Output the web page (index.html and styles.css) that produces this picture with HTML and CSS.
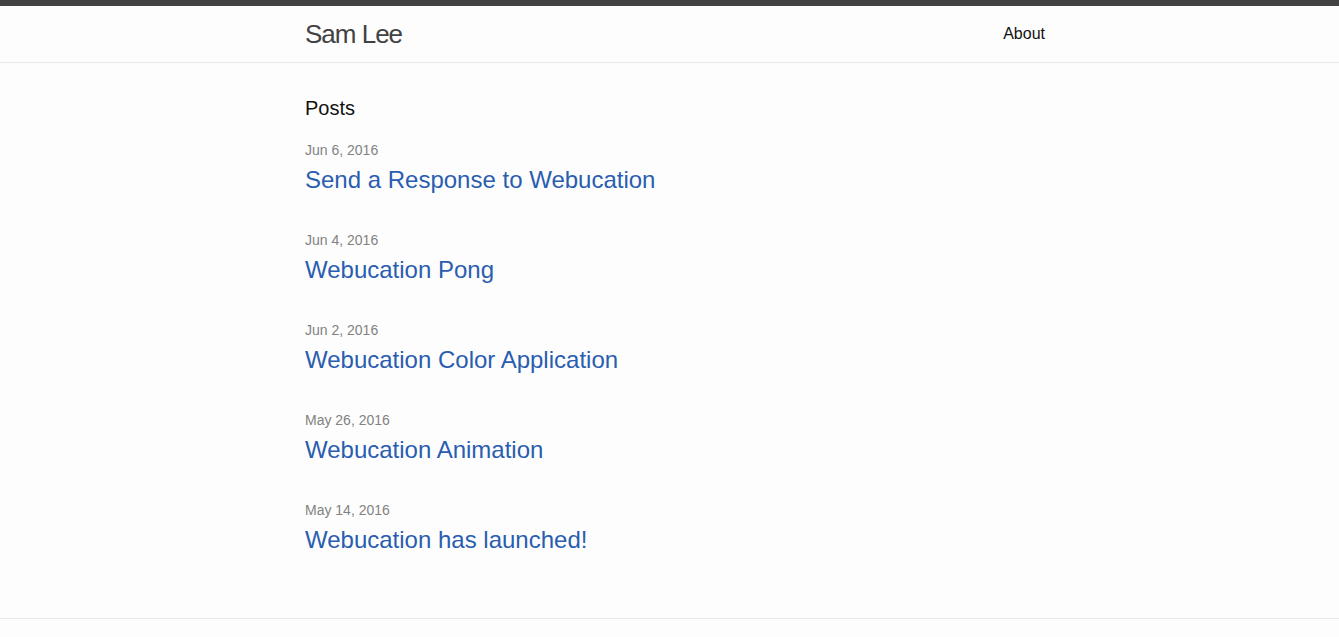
FILE: index.html
```html
<!DOCTYPE html>
<html lang="en">
<head>
<meta charset="utf-8">
<title>Sam Lee</title>
<link rel="stylesheet" href="styles.css">
</head>
<body>
<header class="site-header">
  <div class="wrapper header-row">
    <a class="site-title" href="#">Sam Lee</a>
    <nav class="site-nav">
      <a class="page-link" href="#">About</a>
    </nav>
  </div>
</header>
<main class="page-content">
  <div class="wrapper">
    <h1 class="page-heading">Posts</h1>
    <ul class="post-list">
      <li><span class="post-meta">Jun 6, 2016</span><h2><a class="post-link" href="#">Send a Response to Webucation</a></h2></li>
      <li><span class="post-meta">Jun 4, 2016</span><h2><a class="post-link" href="#">Webucation Pong</a></h2></li>
      <li><span class="post-meta">Jun 2, 2016</span><h2><a class="post-link" href="#">Webucation Color Application</a></h2></li>
      <li><span class="post-meta">May 26, 2016</span><h2><a class="post-link" href="#">Webucation Animation</a></h2></li>
      <li><span class="post-meta">May 14, 2016</span><h2><a class="post-link" href="#">Webucation has launched!</a></h2></li>
    </ul>
  </div>
</main>
<footer class="site-footer">
  <div class="wrapper footer-inner"></div>
</footer>
</body>
</html>
```
FILE: styles.css
```css
html, body {
  margin: 0;
  padding: 0;
}
body {
  font-family: "Liberation Sans", Arial, sans-serif;
  font-size: 16px;
  line-height: 1.5;
  color: #111111;
  background: #fdfdfd;
}
a {
  text-decoration: none;
}
.wrapper {
  max-width: 740px;
  margin: 0 auto;
  padding: 0 19px 0 30px;
}
.site-header {
  border-top: 6px solid #424242;
  border-bottom: 1px solid #e8e8e8;
  min-height: 56px;
}
.header-row {
  display: flex;
  justify-content: space-between;
  align-items: flex-start;
}
.site-title {
  font-size: 26px;
  line-height: 56px;
  letter-spacing: -1px;
  color: #424242;
}
.site-nav {
  line-height: 56px;
}
.page-link {
  color: #111111;
  line-height: 1.5;
}
.page-content {
  padding: 30px 0;
}
.page-heading {
  font-size: 20px;
  font-weight: 400;
  line-height: 1.5;
  margin: 0 0 15px;
}
.post-list {
  list-style: none;
  margin: 0 0 15px;
  padding: 0;
}
.post-list li {
  margin-bottom: 30px;
}
.post-meta {
  font-size: 14px;
  color: #828282;
}
.post-list h2 {
  font-size: 24px;
  font-weight: 400;
  line-height: 1.5;
  margin: 0 0 15px;
}
.post-link {
  display: block;
  color: #2a5db0;
}
.site-footer {
  border-top: 1px solid #e8e8e8;
  padding: 30px 0;
}
.footer-inner {
  min-height: 60px;
}
```
